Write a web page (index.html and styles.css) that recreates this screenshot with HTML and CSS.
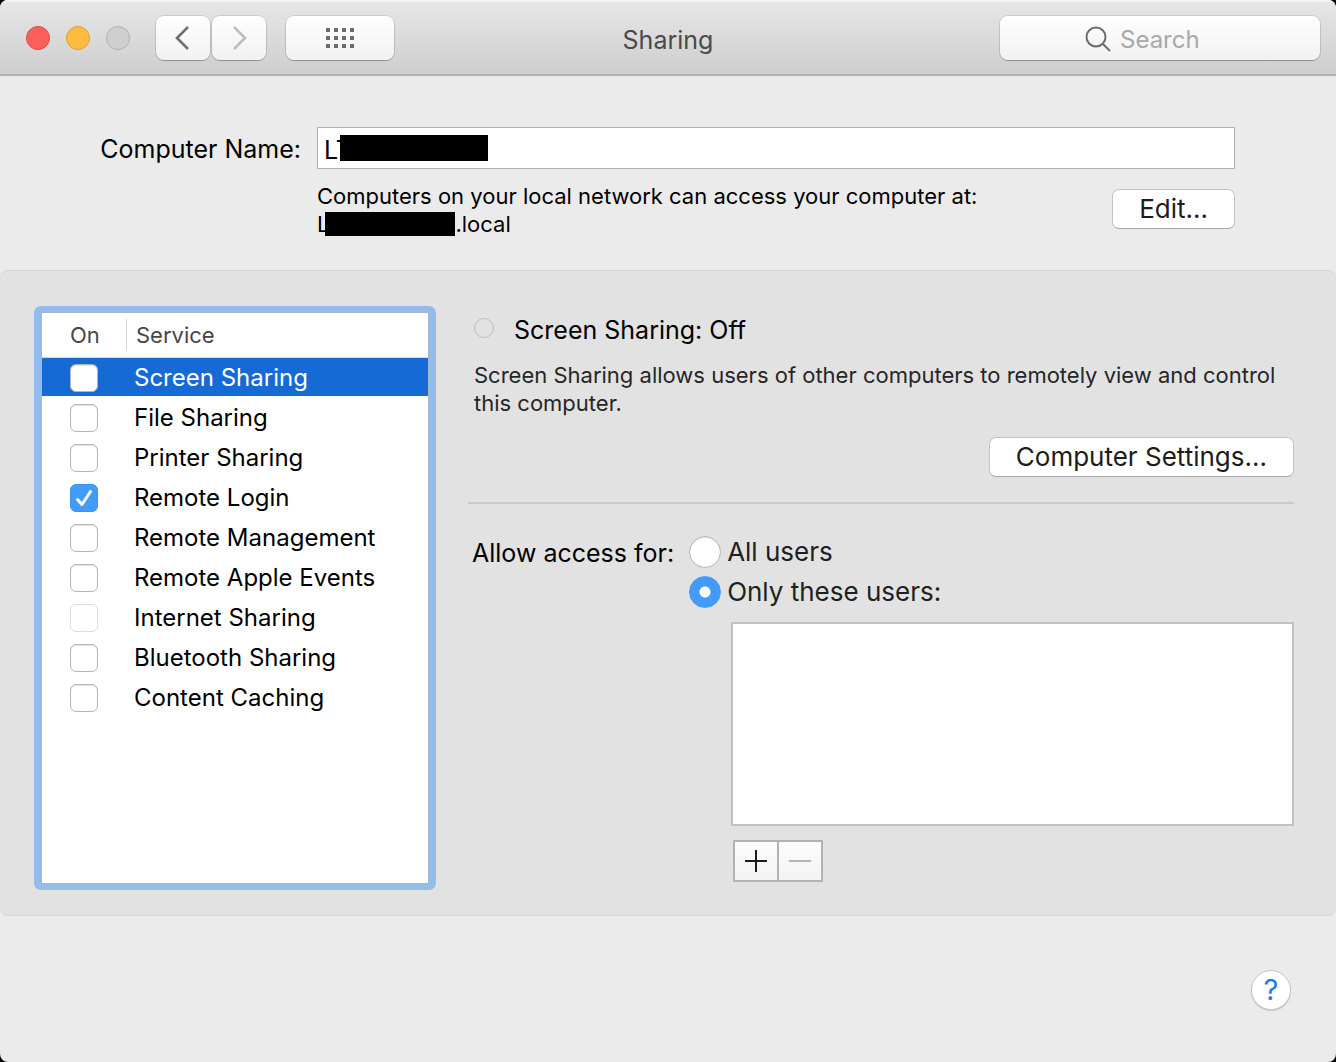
FILE: index.html
```html
<!DOCTYPE html>
<html lang="en">
<head>
  <meta charset="utf-8">
  <meta name="viewport" content="width=device-width, initial-scale=1">
  <title>Sharing</title>
  <link rel="stylesheet" href="styles.css">
</head>
<body>
  <div class="window">
    <header class="titlebar">
      <div class="titlebar-left">
        <div class="lights">
          <button class="light light-close" type="button" aria-label="Close"></button>
          <button class="light light-minimize" type="button" aria-label="Minimize"></button>
          <button class="light light-zoom" type="button" aria-label="Zoom" disabled></button>
        </div>
        <div class="nav">
          <button class="tool tool-nav" type="button" aria-label="Back">
            <svg width="16" height="26" viewBox="0 0 16 26" fill="none" stroke="#6f6f6f" stroke-width="2.6"><path d="M13 2 2 13l11 11"/></svg>
          </button>
          <button class="tool tool-nav" type="button" aria-label="Forward" disabled>
            <svg width="16" height="26" viewBox="0 0 16 26" fill="none" stroke="#bdbdbd" stroke-width="2.6"><path d="M3 2l11 11L3 24"/></svg>
          </button>
        </div>
        <button class="tool tool-grid" type="button" aria-label="Show all">
          <svg width="28" height="20" viewBox="0 0 28 20" fill="#6c6c6c"><path d="M0 0h4v4H0zM8 0h4v4H8zM16 0h4v4h-4zM24 0h4v4h-4zM0 8h4v4H0zM8 8h4v4H8zM16 8h4v4h-4zM24 8h4v4h-4zM0 16h4v4H0zM8 16h4v4H8zM16 16h4v4h-4zM24 16h4v4h-4z"/></svg>
        </button>
      </div>
      <h1 class="title">Sharing</h1>
      <label class="search">
        <svg width="26" height="26" viewBox="0 0 26 26" fill="none" stroke="#6c6c6c" stroke-width="2"><circle cx="11" cy="11" r="9.5"/><path d="M17.5 17.5 25 25"/></svg>
        <input class="search-input" type="search" placeholder="Search" aria-label="Search">
      </label>
    </header>

    <section class="identity">
      <label class="identity-label" for="computer-name">Computer Name:</label>
      <div class="identity-field">
        <input class="name-input" id="computer-name" type="text" value="LT">
        <span class="mask mask-name"></span>
      </div>
      <div class="identity-info">
        <p class="hint">Computers on your local network can access your computer at:<br>
          <span class="host">L<span class="mask mask-host"></span>.local</span></p>
        <button class="button button-edit" type="button">Edit…</button>
      </div>
    </section>

    <main class="panel">
      <div class="services">
        <table class="service-table">
          <thead>
            <tr><th class="col-on" scope="col">On</th><th class="col-service" scope="col"><span class="th-text">Service</span></th></tr>
          </thead>
          <tbody>
            <tr class="selected"><td class="cell-on"><input class="check" type="checkbox" id="s1"></td><td><label for="s1">Screen Sharing</label></td></tr>
            <tr><td class="cell-on"><input class="check" type="checkbox" id="s2"></td><td><label for="s2">File Sharing</label></td></tr>
            <tr><td class="cell-on"><input class="check" type="checkbox" id="s3"></td><td><label for="s3">Printer Sharing</label></td></tr>
            <tr><td class="cell-on"><input class="check" type="checkbox" id="s4" checked></td><td><label for="s4">Remote Login</label></td></tr>
            <tr><td class="cell-on"><input class="check" type="checkbox" id="s5"></td><td><label for="s5">Remote Management</label></td></tr>
            <tr><td class="cell-on"><input class="check" type="checkbox" id="s6"></td><td><label for="s6">Remote Apple Events</label></td></tr>
            <tr><td class="cell-on"><input class="check" type="checkbox" id="s7" disabled></td><td><label for="s7">Internet Sharing</label></td></tr>
            <tr><td class="cell-on"><input class="check" type="checkbox" id="s8"></td><td><label for="s8">Bluetooth Sharing</label></td></tr>
            <tr><td class="cell-on"><input class="check" type="checkbox" id="s9"></td><td><label for="s9">Content Caching</label></td></tr>
          </tbody>
        </table>
      </div>

      <div class="detail">
        <h2 class="status"><span class="status-dot"></span>Screen Sharing: Off</h2>
        <p class="description">Screen Sharing allows users of other computers to remotely view and control this computer.</p>
        <button class="button button-settings" type="button">Computer Settings…</button>
        <hr class="divider">
        <div class="access" role="radiogroup" aria-labelledby="access-label">
          <span class="access-label" id="access-label">Allow access for:</span>
          <div class="access-options">
            <label class="option"><input class="radio" type="radio" name="access">All users</label>
            <label class="option"><input class="radio" type="radio" name="access" checked>Only these users:</label>
            <select class="user-list" multiple aria-label="Allowed users"></select>
            <div class="list-actions">
              <button class="list-button" type="button" aria-label="Add user">
                <svg width="22" height="22" viewBox="0 0 22 22" stroke="#1c1c1c" stroke-width="2"><path d="M0 11h22M11 0v22"/></svg>
              </button>
              <button class="list-button" type="button" aria-label="Remove user" disabled>
                <svg width="22" height="22" viewBox="0 0 22 22" stroke="#b4b4b4" stroke-width="2"><path d="M0 11h22"/></svg>
              </button>
            </div>
          </div>
        </div>
      </div>
    </main>

    <footer class="footer">
      <button class="help" type="button" aria-label="Help">?</button>
    </footer>
  </div>
</body>
</html>
```
FILE: styles.css
```css
* {
  box-sizing: border-box;
}

html {
  background: #000;
}

body {
  margin: 0;
  color: #000;
  font-family: Inter, "Liberation Sans", sans-serif;
  font-size: 25px;
  line-height: 32px;
}

h1,
h2,
p {
  margin: 0;
  font-weight: 400;
}

button,
input,
select {
  margin: 0;
  padding: 0;
  color: inherit;
  font: inherit;
}

svg {
  display: block;
  flex: none;
}

.window {
  display: flex;
  flex-direction: column;
  min-height: 100vh;
  overflow: hidden;
  background: #ebebeb;
  border-radius: 8px;
}

/* Title bar */

.titlebar {
  display: grid;
  grid-template-columns: 1fr auto 1fr;
  align-items: center;
  height: 76px;
  padding: 2px 16px 0 26px;
  background: linear-gradient(#e7e7e7, #cecece);
  border-bottom: 2px solid #b1b1b1;
  box-shadow: inset 0 2px #f4f4f4;
}

.titlebar-left {
  display: flex;
  align-items: center;
}

.lights {
  display: flex;
  gap: 16px;
  margin-right: 26px;
}

.light {
  width: 24px;
  height: 24px;
  border: 1px solid;
  border-radius: 50%;
}

.light-close {
  background: #fc605b;
  border-color: #df4744;
}

.light-minimize {
  background: #fdbc40;
  border-color: #de9f34;
}

.light-zoom {
  background: #cfcfcf;
  border-color: #b1b1b1;
}

.nav {
  display: flex;
  gap: 2px;
  margin-right: 20px;
}

.tool,
.search {
  display: flex;
  align-items: center;
  justify-content: center;
  height: 44px;
  background: linear-gradient(#fefefe, #f1f1f1);
  border: 0;
  border-radius: 8px;
  box-shadow: 0 0 0 1px rgba(0, 0, 0, 0.1), 0 1px 1px rgba(0, 0, 0, 0.22);
}

.tool-nav {
  width: 54px;
}

.tool-grid {
  width: 108px;
}

.title {
  color: #4a4a4a;
  font-size: 25px;
  padding: 4px 10px 0 0;
}

.search {
  justify-content: flex-start;
  justify-self: end;
  gap: 9px;
  width: 320px;
  padding: 2px 16px 0 85px;
}

.search-input {
  flex: 1;
  min-width: 0;
  height: 40px;
  background: none;
  border: 0;
  outline: 0;
  appearance: none;
  font-size: 24px;
}

.search-input::placeholder {
  color: #a9a9a9;
  opacity: 1;
}

/* Computer name */

.identity {
  display: grid;
  grid-template-columns: 301px 1fr;
  column-gap: 16px;
  row-gap: 13px;
  padding: 51px 101px 32px 0;
}

.identity-label {
  padding-top: 6px;
  text-align: right;
}

.identity-field {
  position: relative;
}

.name-input {
  display: block;
  width: 100%;
  height: 42px;
  padding: 4px 6px 0;
  background: #fff;
  border: 1px solid #b0b0b0;
  border-radius: 0;
}

.mask {
  background: #000;
}

.mask-name {
  position: absolute;
  top: 8px;
  left: 23px;
  width: 148px;
  height: 26px;
}

.identity-info {
  display: flex;
  grid-column: 2;
  align-items: flex-start;
  justify-content: space-between;
  gap: 24px;
}

.hint,
.description {
  font-size: 22px;
  line-height: 28px;
}

.host {
  display: flex;
  align-items: center;
}

.mask-host {
  width: 130px;
  height: 24px;
  margin-left: -4px;
}

.button {
  height: 40px;
  padding: 0 26px;
  color: #1c1c1c;
  background: #fff;
  border: 1px solid #c4c4c4;
  border-bottom-color: #a8a8a8;
  border-radius: 7px;
  font-size: 26px;
  white-space: nowrap;
}

.button-edit {
  flex: none;
  margin-top: 7px;
}

/* Sharing panel */

.panel {
  display: flex;
  align-items: flex-start;
  gap: 32px;
  padding: 35px 42px 25px 34px;
  background: #e2e2e2;
  border-top: 1px solid #d3d3d3;
  border-bottom: 1px solid #d8d8d8;
  border-radius: 8px;
}

.services {
  flex: none;
  width: 402px;
  min-height: 584px;
  padding: 1px;
  background: #fff;
  border: solid #92bdea;
  border-width: 6px 7px;
  border-radius: 7px;
  box-shadow: inset 0 0 0 1px #a6b6c6;
}

.service-table {
  width: 100%;
  border-spacing: 0;
  font-size: 24px;
}

.service-table th {
  height: 45px;
  padding: 0;
  border-bottom: 1px solid #d8d8d8;
  color: #464646;
  font-size: 22px;
  font-weight: 400;
  text-align: left;
}

.service-table .col-on {
  width: 92px;
  padding-left: 28px;
}

.th-text {
  display: block;
  margin-left: -8px;
  padding-left: 9px;
  border-left: 1px solid #d8d8d8;
}

.service-table td {
  height: 40px;
  padding: 0;
}

.service-table .cell-on {
  padding-left: 28px;
}

.selected {
  color: #fff;
  background: linear-gradient(#156ad6 38px, #fff 38px);
}

.check,
.radio {
  display: block;
  flex: none;
  appearance: none;
  background: #fff;
  border: 1px solid #b4b4b4;
}

.check {
  width: 28px;
  height: 28px;
  border-radius: 6px;
  box-shadow: inset 0 1px 1px rgba(0, 0, 0, 0.12);
}

.check:disabled {
  border-color: #dcdcdc;
  box-shadow: none;
}

.check:checked {
  background: #439bf8 url("data:image/svg+xml,%3Csvg xmlns='http://www.w3.org/2000/svg' viewBox='0 0 28 28'%3E%3Cpath d='M7.5 15.5 12 20.5 20.5 7.5' fill='none' stroke='%23fff' stroke-width='3' stroke-linecap='round' stroke-linejoin='round'/%3E%3C/svg%3E") center / 28px;
  border-color: #3c93f0;
  box-shadow: none;
}

.detail {
  flex: 1;
  min-width: 0;
}

.status {
  display: flex;
  align-items: center;
  gap: 20px;
  padding: 8px 0 0 6px;
  font-size: 25px;
}

.status-dot {
  width: 20px;
  height: 20px;
  margin-bottom: 4px;
  border: 1px solid #bdbdbd;
  border-radius: 50%;
}

.description {
  margin-top: 15px;
  padding-left: 6px;
  color: #262626;
}

.button-settings {
  display: block;
  margin: 20px 0 0 auto;
}

.divider {
  height: 2px;
  margin: 25px 0 32px;
  background: #cbcbcb;
  border: 0;
}

.access {
  display: flex;
  gap: 15px;
  padding-left: 4px;
}

.access-label {
  flex: none;
  padding-top: 1px;
}

.access-options {
  display: flex;
  flex: 1;
  flex-direction: column;
  gap: 8px;
  min-width: 0;
}

.option {
  display: flex;
  align-items: center;
  gap: 6px;
  color: #1f1f1f;
  font-size: 26px;
}

.radio {
  width: 32px;
  height: 32px;
  border-radius: 50%;
  box-shadow: inset 0 1px 1px rgba(0, 0, 0, 0.12);
}

.radio:checked {
  background: radial-gradient(circle, #fff 5px, #439bf8 6px);
  border-color: #439bf8;
  box-shadow: none;
}

.user-list {
  height: 204px;
  margin: 6px 0 0 42px;
  background: #fff;
  border: 2px solid #c1c1c1;
  border-radius: 0;
  outline: 0;
  appearance: none;
}

.list-actions {
  display: flex;
  margin: 6px 0 0 44px;
}

.list-button {
  display: flex;
  align-items: center;
  justify-content: center;
  width: 46px;
  height: 42px;
  background: linear-gradient(#fcfcfc, #f3f3f3);
  border: 2px solid #b2b2b2;
}

.list-button + .list-button {
  margin-left: -2px;
}

/* Footer */

.footer {
  display: flex;
  flex: 1;
  align-items: flex-end;
  justify-content: flex-end;
  padding: 54px 45px 52px;
}

.help {
  width: 40px;
  height: 40px;
  color: #1a7bf0;
  background: #fff;
  border: 1px solid #c6c6c6;
  border-radius: 50%;
  box-shadow: 0 1px 1px rgba(0, 0, 0, 0.15);
  font-size: 29px;
}
```
